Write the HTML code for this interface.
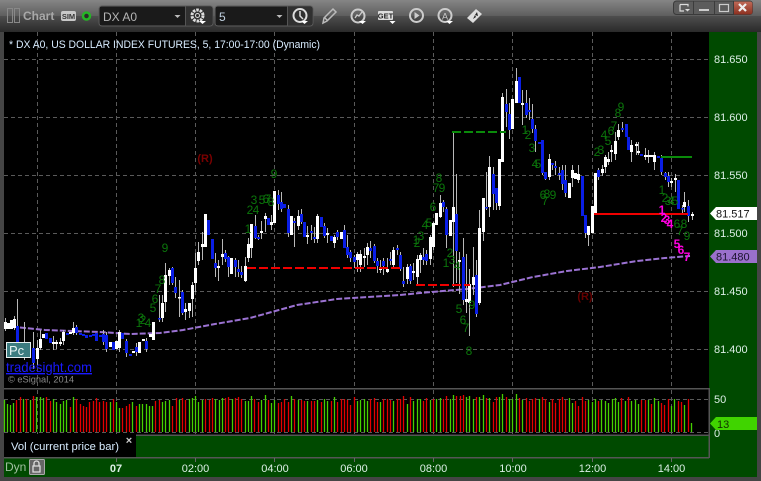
<!DOCTYPE html>
<html><head><meta charset="utf-8"><title>Chart</title>
<style>html,body{margin:0;padding:0;background:#444;width:761px;height:481px;overflow:hidden}svg{display:block}text{font-family:"Liberation Sans",sans-serif}</style></head>
<body>
<svg width="761" height="481" viewBox="0 0 761 481" xmlns="http://www.w3.org/2000/svg">
<defs>
<linearGradient id="t1" x1="0" y1="0" x2="0" y2="1"><stop offset="0" stop-color="#858585"/><stop offset="1" stop-color="#5e5e5e"/></linearGradient>
<linearGradient id="t2" x1="0" y1="0" x2="0" y2="1"><stop offset="0" stop-color="#4e4e4e"/><stop offset="1" stop-color="#2a2a2a"/></linearGradient>
<linearGradient id="cl" x1="0" y1="0" x2="0" y2="1"><stop offset="0" stop-color="#c06a58"/><stop offset="1" stop-color="#8c3020"/></linearGradient>
</defs>
<rect width="761" height="481" fill="#454545"/>
<rect width="761" height="16" fill="url(#t1)"/>
<rect y="16" width="761" height="16" fill="url(#t2)"/>
<rect x="4" y="32" width="705" height="356" fill="#000"/>
<rect x="709" y="32" width="48" height="445" fill="#004a00"/>
<rect x="4" y="388" width="705" height="1.5" fill="#555"/>
<rect x="4" y="389.5" width="705" height="45" fill="#000"/>
<rect x="4" y="434.5" width="705" height="1.5" fill="#555"/>
<rect x="4" y="436" width="705" height="21" fill="#004a00"/>
<rect x="4" y="434" width="132" height="23" fill="#000"/>
<rect x="4" y="457" width="705" height="1.5" fill="#555"/>
<rect x="4" y="458.5" width="753" height="18.5" fill="#004a00"/>
<rect x="708.5" y="388" width="1.5" height="70" fill="#555"/>

<!-- grid -->
<g stroke="#5a5a5a" stroke-width="1" stroke-dasharray="4 3" fill="none">
<path d="M4 59.5H709M4 117.5H709M4 175.5H709M4 233.5H709M4 291.5H709M4 349.5H709"/>
<path d="M37.5 32V388M116.5 32V388M195.5 32V388M274.5 32V388M354.5 32V388M433.5 32V388M512.5 32V388M592.5 32V388M671.5 32V388"/>
<path d="M37.5 390V434M116.5 390V434M195.5 390V434M274.5 390V434M354.5 390V434M433.5 390V434M512.5 390V434M592.5 390V434M671.5 390V434"/>
<path d="M4 399.5H709M4 432.5H709"/>
</g>
<path d="M116.5 458v4M195.5 458v4M274.5 458v4M354.5 458v4M433.5 458v4M512.5 458v4M592.5 458v4M671.5 458v4" stroke="#666" fill="none"/>

<!-- volume -->
<g fill="none" stroke-width="1.3">
<path stroke="#46d000" d="M4.5 432V400M7.5 432V404M10.5 432V405M13.5 432V403M23.5 432V399M30.5 432V400M36.5 432V397M40.5 432V397M43.5 432V398M53.5 432V399M56.5 432V402M60.5 432V404M63.5 432V401M66.5 432V400M73.5 432V397M110.5 432V402M116.5 432V402M119.5 432V408M132.5 432V402M139.5 432V404M142.5 432V404M146.5 432V404M149.5 432V406M152.5 432V406M162.5 432V402M165.5 432V401M169.5 432V400M179.5 432V400M189.5 432V399M192.5 432V398M195.5 432V396M198.5 432V402M202.5 432V400M215.5 432V399M219.5 432V400M222.5 432V398M232.5 432V399M245.5 432V401M248.5 432V401M251.5 432V396M261.5 432V400M265.5 432V395M271.5 432V403M274.5 432V400M291.5 432V396M298.5 432V400M307.5 432V401M317.5 432V400M324.5 432V399M327.5 432V401M334.5 432V397M357.5 432V401M360.5 432V400M364.5 432V399M367.5 432V401M380.5 432V402M393.5 432V401M407.5 432V404M413.5 432V401M417.5 432V399M420.5 432V399M430.5 432V400M436.5 432V399M440.5 432V398M450.5 432V399M453.5 432V395M466.5 432V397M469.5 432V396M473.5 432V399M479.5 432V397M483.5 432V395M489.5 432V398M499.5 432V397M502.5 432V394M509.5 432V399M512.5 432V399M516.5 432V394M522.5 432V400M539.5 432V399M549.5 432V402M569.5 432V398M572.5 432V403M588.5 432V400M592.5 432V402M595.5 432V399M601.5 432V400M605.5 432V401M608.5 432V403M612.5 432V399M615.5 432V398M618.5 432V402M625.5 432V401M631.5 432V401M635.5 432V400M638.5 432V404M648.5 432V400M654.5 432V398M658.5 432V401M671.5 432V406M674.5 432V399M684.5 432V405M691.5 432V423"/>
<path stroke="#e40000" d="M16.5 432V400M20.5 432V397M26.5 432V399M33.5 432V396M46.5 432V397M50.5 432V401M70.5 432V407M76.5 432V399M80.5 432V404M83.5 432V406M86.5 432V407M89.5 432V402M93.5 432V401M96.5 432V398M99.5 432V402M103.5 432V401M106.5 432V402M113.5 432V399M122.5 432V408M126.5 432V406M129.5 432V404M136.5 432V406M155.5 432V401M159.5 432V400M172.5 432V406M176.5 432V398M182.5 432V398M185.5 432V400M205.5 432V399M209.5 432V400M212.5 432V398M225.5 432V398M228.5 432V397M235.5 432V398M238.5 432V397M241.5 432V399M254.5 432V399M258.5 432V402M268.5 432V400M278.5 432V403M281.5 432V402M284.5 432V399M288.5 432V402M294.5 432V399M301.5 432V400M304.5 432V401M311.5 432V401M314.5 432V401M321.5 432V402M331.5 432V401M337.5 432V402M341.5 432V399M344.5 432V399M347.5 432V400M350.5 432V405M354.5 432V397M370.5 432V399M374.5 432V398M377.5 432V402M383.5 432V399M387.5 432V399M390.5 432V400M397.5 432V399M400.5 432V399M403.5 432V396M410.5 432V397M423.5 432V401M426.5 432V398M433.5 432V399M443.5 432V399M446.5 432V396M456.5 432V396M460.5 432V396M463.5 432V395M476.5 432V397M486.5 432V398M493.5 432V402M496.5 432V397M506.5 432V397M519.5 432V398M526.5 432V398M529.5 432V401M532.5 432V399M535.5 432V398M542.5 432V397M545.5 432V399M552.5 432V399M555.5 432V403M559.5 432V399M562.5 432V397M565.5 432V400M575.5 432V401M578.5 432V406M582.5 432V397M585.5 432V401M598.5 432V401M621.5 432V398M628.5 432V397M641.5 432V400M645.5 432V400M651.5 432V404M661.5 432V403M664.5 432V405M668.5 432V399M678.5 432V401M681.5 432V402M688.5 432V399"/>
</g>

<!-- MA -->
<path d="M4 326L25 328L45 330L100 332L130 334L160 333L183 330L215 324L250 318L297 305L337 299L400 295L420 293L467 289L500 285L533 277L567 271L600 267L637 261L665 258L690 256" fill="none" stroke="#9b72d2" stroke-width="2" stroke-dasharray="6 2"/>

<!-- wicks -->
<path fill="none" stroke="#b8b8b8" stroke-width="1" d="M5.5 318V331M14.5 316V330M17.5 299V350M24.5 322V360M33.5 332V369M37.5 340V365M40.5 330V350M53.5 336V350M56.5 340V349M60.5 338V346M63.5 330V345M73.5 322V335M76.5 325V335M103.5 330V345M106.5 332V352M119.5 330V352M126.5 339V357M136.5 343V356M146.5 338V352M159.5 295V322M162.5 295V322M165.5 263V312M169.5 268V285M172.5 267V285M175.5 277V298M179.5 280V317M182.5 290V315M185.5 303V320M189.5 303V318M192.5 282V317M195.5 253V292M198.5 242V265M202.5 232V260M205.5 214V247M215.5 253V277M218.5 260V281M222.5 239V265M225.5 250V262M228.5 256V277M231.5 258V274M235.5 258V277M238.5 260V277M241.5 266V278M245.5 257V282M248.5 238V262M251.5 225V258M255.5 215V239M258.5 235V240M261.5 221V239M265.5 213V232M271.5 215V230M278.5 190V210M281.5 192V212M288.5 205V237M294.5 218V247M298.5 210V230M301.5 209V224M307.5 226V244M311.5 225V240M314.5 227V243M317.5 214V243M324.5 223V238M327.5 228V243M334.5 235V248M337.5 230V240M344.5 225V248M347.5 235V258M350.5 250V262M354.5 255V268M357.5 252V272M360.5 250V272M364.5 248V267M367.5 243V265M370.5 241V258M374.5 244V263M377.5 258V273M380.5 260V273M383.5 258V275M387.5 258V273M390.5 252V265M393.5 247V268M397.5 245V255M400.5 252V271M403.5 267V287M407.5 264V284M410.5 264V284M413.5 263V280M417.5 255V285M420.5 253V273M423.5 248V265M426.5 250V265M430.5 235V265M433.5 222V250M440.5 195V218M443.5 200V212M446.5 207V248M453.5 132V287M456.5 174V283M459.5 252V294M463.5 238V305M466.5 254V313M469.5 269V336M473.5 247V295M476.5 260V317M479.5 210V305M483.5 198V241M486.5 172V210M489.5 156V217M493.5 167V210M496.5 188V210M499.5 159V210M502.5 93V162M506.5 89V127M509.5 103V139M516.5 68V103M522.5 90V125M526.5 90V118M529.5 98V120M532.5 104V133M535.5 125V152M542.5 140V175M545.5 172V180M549.5 154V180M552.5 163V170M555.5 161V175M559.5 167V180M562.5 165V190M565.5 165V197M572.5 165V187M578.5 165V183M585.5 215V238M588.5 226V246M598.5 168V180M602.5 165V176M605.5 155V173M608.5 152V165M611.5 145V162M615.5 132V160M618.5 124V140M622.5 122V132M631.5 140V162M636.5 142V155M638.5 142V155M645.5 148V160M648.5 150V163M654.5 152V170M661.5 155V175M665.5 172V180M668.5 172V187M671.5 178V187M675.5 174V192M682.5 205V214M684.5 192V212M688.5 200V222M692.5 212V220"/>

<!-- white bodies -->
<path fill="none" stroke="#fff" stroke-width="3" d="M5.5 322V329M8.5 323V329M11.5 320V329M14.5 319V328M37.5 348V359M40.5 339V348M43.5 334V338M53.5 342V344M56.5 342V344M60.5 342V344M63.5 332V341M70.5 332V334M73.5 328V333M110.5 342V347M116.5 341V349M119.5 332V348M133.5 351V353M139.5 342V353M143.5 339V341M150.5 334V337M153.5 322V340M162.5 303V318M165.5 275V302M169.5 270V276M179.5 297V298.5M185.5 309V312M189.5 303V311M192.5 285V299M195.5 268V283M198.5 252V261M202.5 244V247M205.5 214V247M218.5 266V268M222.5 254V257M231.5 258V274M245.5 266V281M248.5 244V258M251.5 224V248M261.5 231V233M265.5 216V219M271.5 222V225M274.5 191V223M291.5 216V235M298.5 216V226M307.5 235V237M317.5 216V239M327.5 233V235M334.5 237V243M341.5 232V239M357.5 254V260M360.5 254V265M364.5 256V258M367.5 247V255M380.5 268V270M387.5 269V272M393.5 250V265M407.5 267V279M413.5 271V273M417.5 259V277M420.5 255V260M430.5 237V259M433.5 223V247M436.5 213V225M440.5 203V217M450.5 220V236M453.5 207V222M459.5 260V262M466.5 299V302M469.5 284V303M473.5 277V285M479.5 228V303M483.5 198V232M489.5 167V207M499.5 159V206M502.5 97V162M512.5 99V129M516.5 81V103M522.5 103V105M549.5 159V177M569.5 183V198M572.5 170V178M575.5 173V179M578.5 174V180M588.5 226V235M592.5 206V233M595.5 173V215M602.5 169V173M605.5 157V167M608.5 159V162M611.5 150V152M615.5 141V154M618.5 130V137M631.5 145V152M636.5 144V146M638.5 151V153M645.5 155V157M648.5 155V157M651.5 155V157M654.5 155V162M671.5 181V183M675.5 178V180M684.5 202V207M692.5 214V216"/>
<!-- blue bodies -->
<path fill="none" stroke="#0a1ee6" stroke-width="3" d="M17.5 326V343M20.5 342V347M24.5 346V350M27.5 342V350M33.5 348V363M46.5 333V339M50.5 338V343M67.5 333V335M76.5 327V333M80.5 333V335M83.5 334V336M86.5 335V338M90.5 335V337M93.5 334V336M96.5 333V341M100.5 335V337M103.5 334V342M106.5 335V349M113.5 342V350M122.5 333V339M126.5 341V353M130.5 354V356M136.5 347V352M146.5 341V349M159.5 318V319.5M172.5 268V283M175.5 287V293M182.5 292V313M208.5 220V235M212.5 239V259M215.5 263V268M225.5 253V259M228.5 257V267M235.5 260V267M238.5 269V272M241.5 272V275M255.5 226V238M258.5 237V239M268.5 218V225M278.5 195V204M281.5 202V209M284.5 204V208M288.5 209V233M294.5 221V223M301.5 214V222M304.5 222V237M311.5 231V233M314.5 237V239M321.5 217V227M324.5 226V236M331.5 236V241M337.5 232V237M344.5 230V248M347.5 247V255M350.5 252V258M354.5 257V262M370.5 248V251M374.5 246V261M377.5 261V266M383.5 261V266M390.5 259V261M397.5 248V250M400.5 255V269M403.5 281V284M410.5 266V281M423.5 257V260M426.5 254V261M443.5 202V207M446.5 209V235M456.5 214V251M463.5 257V300M476.5 275V314M486.5 207V208.5M493.5 174V194M496.5 188V203M506.5 104V112M509.5 114V130M519.5 77V103M526.5 103V115M529.5 110V112M532.5 119V129M535.5 129V141M539.5 142V144M542.5 140V173M545.5 172V179M552.5 163V165M555.5 166V168M559.5 173V175M562.5 170V184M565.5 180V193M582.5 176V216M585.5 215V233M598.5 170V177M622.5 128V130M626.5 124V137M628.5 137V150M641.5 154V156M658.5 156V158M661.5 158V172M665.5 173V177M668.5 176V182M678.5 180V209M682.5 208V209.5M688.5 206V216"/>

<!-- levels -->
<path d="M247 268H400" fill="none" stroke="#f00000" stroke-width="2" stroke-dasharray="9 3"/>
<path d="M416 285H470" fill="none" stroke="#f00000" stroke-width="2" stroke-dasharray="9 3"/>
<path d="M452 132H506" fill="none" stroke="#0a8a0a" stroke-width="2" stroke-dasharray="9 3"/>
<path d="M594 214H688" fill="none" stroke="#f00000" stroke-width="2"/>
<path d="M661 157H692" fill="none" stroke="#0a8a0a" stroke-width="2"/>

<!-- setup numbers -->
<g fill="#0b750b" font-size="12" text-anchor="middle">
<text x="165" y="252">9</text><text x="162" y="284">8</text><text x="158" y="293">7</text><text x="155" y="303">6</text><text x="153" y="312">5</text><text x="148" y="327">4</text><text x="143" y="324">2</text><text x="139" y="327">1</text><text x="141" y="322">3</text>
<text x="248" y="233">1</text><text x="250" y="214">2</text><text x="256" y="214">4</text><text x="254" y="204">3</text><text x="262" y="204">5</text><text x="266" y="203">6</text><text x="268" y="203">7</text><text x="271" y="206">8</text><text x="274" y="178">9</text>
<text x="439" y="182">8</text><text x="436" y="192">7</text><text x="442" y="192">9</text><text x="433" y="211">6</text><text x="429" y="227">5</text><text x="425" y="229">4</text><text x="421" y="240">3</text><text x="417" y="247">2</text><text x="416" y="244">1</text>
<text x="450" y="257">2</text><text x="446" y="267">1</text><text x="452" y="264">3</text><text x="457" y="270">4</text><text x="459" y="313">5</text><text x="463" y="324">6</text><text x="466" y="332">7</text><text x="469" y="355">8</text><text x="472" y="309">9</text>
<text x="525" y="134">1</text><text x="528" y="139">2</text><text x="532" y="152">3</text><text x="535" y="168">4</text><text x="538" y="168">5</text><text x="543" y="199">6</text><text x="545" y="205">7</text><text x="547" y="198">8</text><text x="553" y="199">9</text>
<text x="621" y="111">9</text><text x="618" y="117">8</text><text x="614" y="130">7</text><text x="611" y="135">6</text><text x="608" y="145">5</text><text x="604" y="139">4</text><text x="601" y="154">3</text><text x="597" y="156">2</text>
<text x="662" y="194">1</text><text x="665" y="202">2</text><text x="668" y="205">3</text><text x="671" y="205">4</text><text x="675" y="205">5</text><text x="677" y="228">6</text><text x="680" y="235">7</text><text x="684" y="228">8</text><text x="687" y="240">9</text>
</g>
<g fill="#ff00e0" font-size="12" text-anchor="middle" font-weight="bold">
<text x="662" y="214">1</text><text x="664" y="222">2</text><text x="667" y="224">3</text><text x="670" y="228">4</text><text x="677" y="248">5</text><text x="681" y="254">6</text><text x="687" y="261">7</text>
</g>
<g fill="#7a0000" font-size="11" text-anchor="middle" font-weight="bold"><text x="205" y="162">(R)</text></g>
<g fill="#660000" font-size="11" text-anchor="middle" font-weight="bold"><text x="585" y="300">(R)</text></g>

<!-- watermark items -->
<rect x="6.5" y="342.5" width="24" height="15" fill="#3c7c80" stroke="#e8f0f0"/>
<text x="9" y="355" fill="#e8f4f4" font-size="13">Pc</text>
<text x="6" y="372" fill="#1a1aff" font-size="14" text-decoration="underline" textLength="86" lengthAdjust="spacingAndGlyphs">tradesight.com</text>
<text x="8" y="382.5" fill="#8a8a8a" font-size="9.5" textLength="66" lengthAdjust="spacingAndGlyphs">© eSignal, 2014</text>

<!-- title -->
<text x="9" y="48" fill="#d8ecff" font-size="11" textLength="311" lengthAdjust="spacingAndGlyphs">* DX A0, US DOLLAR INDEX FUTURES, 5, 17:00-17:00 (Dynamic)</text>

<!-- axis -->
<g fill="#dcefe6" font-size="11">
<text x="714" y="63">81.650</text><text x="714" y="121">81.600</text><text x="714" y="179">81.550</text><text x="714" y="237">81.500</text><text x="714" y="295">81.450</text><text x="714" y="353">81.400</text>
<text x="714" y="403">50</text><text x="714" y="437">0</text>
</g>
<path d="M710 213.5L716 207H757V220H716Z" fill="#fff"/>
<text x="716" y="217.5" fill="#111" font-size="11">81.517</text>
<path d="M710 256.5L716 250H757V263H716Z" fill="#9a70cc"/>
<text x="716" y="260.5" fill="#1c1430" font-size="11">81.480</text>
<path d="M710 423.5L716 417H757V430H716Z" fill="#40d400"/>
<text x="717" y="428" fill="#103000" font-size="11">13</text>

<!-- Vol tab -->
<text x="11" y="450" fill="#d8ecff" font-size="11" textLength="108" lengthAdjust="spacingAndGlyphs">Vol (current price bar)</text>
<text x="129" y="444" fill="#cccccc" font-size="11" font-weight="bold" text-anchor="middle">×</text>

<!-- time axis -->
<text x="5" y="471" fill="#a0c0a0" font-size="12">Dyn</text>
<rect x="29.5" y="459.5" width="15" height="15" rx="1" fill="#666" stroke="#aaa"/>
<path d="M34 466v-2.5a2.5 2.5 0 0 1 5 0v2.5M33 466h7v6h-7z" fill="none" stroke="#ddd" stroke-width="1.3"/>
<g fill="#dcefe6" font-size="11" text-anchor="middle">
<text x="116" y="472" font-weight="bold">07</text><text x="195.5" y="472">02:00</text><text x="275" y="472">04:00</text><text x="354" y="472">06:00</text><text x="433.5" y="472">08:00</text><text x="513" y="472">10:00</text><text x="592.5" y="472">12:00</text><text x="671.5" y="472">14:00</text>
</g>

<!-- toolbar -->
<rect x="7.5" y="8.5" width="5" height="14" fill="none" stroke="#888"/>
<rect x="14.5" y="8.5" width="5" height="14" fill="none" stroke="#888"/>
<text x="23" y="20" fill="#a8a8a8" font-size="12" font-weight="bold">Chart</text>
<rect x="61" y="11" width="15" height="10" rx="2" fill="#c8c8c8"/>
<text x="68.5" y="19" fill="#333" font-size="7.5" font-weight="bold" text-anchor="middle">SIM</text>
<circle cx="86.5" cy="16" r="3.5" fill="#2a2a2a" stroke="#25b525" stroke-width="2.5"/>

<rect x="99" y="6" width="114" height="20" rx="3" fill="#222" stroke="#5a5a5a"/>
<rect x="100" y="7" width="85" height="18" fill="#1a1a1a"/>
<rect x="186" y="7" width="26" height="18" fill="#303030"/>
<path d="M185.5 6v20" stroke="#555"/>
<text x="103" y="21" fill="#b4b4b4" font-size="12">DX A0</text>
<path d="M174.5 15h6l-3 3z" fill="#bbb"/>
<circle cx="197.5" cy="15.5" r="5.5" fill="none" stroke="#ddd" stroke-width="3" stroke-dasharray="2.5 1"/>
<circle cx="197.5" cy="15.5" r="2" fill="none" stroke="#ddd"/>
<path d="M199 21h7l-3.5 3z" fill="#fff"/>

<rect x="215" y="6" width="98" height="20" rx="3" fill="#222" stroke="#5a5a5a"/>
<rect x="216" y="7" width="71" height="18" fill="#1a1a1a"/>
<rect x="288" y="7" width="24" height="18" fill="#303030"/>
<path d="M287.5 6v20" stroke="#555"/>
<text x="219" y="21" fill="#c0d0e0" font-size="12">5</text>
<path d="M276.5 15h6l-3 3z" fill="#bbb"/>
<circle cx="300" cy="15.5" r="6.5" fill="none" stroke="#ddd" stroke-width="2"/>
<path d="M300 11v5l3 3" fill="none" stroke="#ddd" stroke-width="1.5"/>
<path d="M301 21h7l-3.5 3z" fill="#fff"/>

<path d="M323 23l1-5 9-9 3 3-9 9zM325 18l3 3" fill="none" stroke="#bbb" stroke-width="1.5"/>
<circle cx="358" cy="16" r="6.5" fill="none" stroke="#ccc" stroke-width="2"/>
<path d="M355 18l2-3 2 1 3-4" fill="none" stroke="#ccc" stroke-width="1.3"/>
<path d="M359 21h7l-3.5 3z" fill="#fff"/>
<rect x="378" y="11" width="15" height="9" rx="1" fill="#ddd"/>
<text x="385.5" y="18.5" fill="#222" font-size="7.5" font-weight="bold" text-anchor="middle">GET</text>
<path d="M389.5 21h6l-3 3z" fill="#fff"/>
<circle cx="416.5" cy="15.5" r="6.5" fill="none" stroke="#ccc" stroke-width="2"/>
<path d="M414.5 12v7l5-3.5z" fill="#ccc"/>
<circle cx="445" cy="15.5" r="6.5" fill="none" stroke="#ccc" stroke-width="2"/>
<text x="445" y="19.5" fill="#ccc" font-size="9" text-anchor="middle">A</text>
<path d="M446 21h7l-3.5 3z" fill="#fff"/>
<path d="M467 18l9-9 6 5-9 9z" fill="#ddd"/>
<path d="M473 19l2-4 1 2zM477 12l1 4-3-1z" fill="#222"/>

<!-- window buttons -->
<rect x="673.5" y="1" width="79" height="13.5" rx="3" fill="#5c5c5c" stroke="#3a3a3a"/>
<path d="M693.5 1v13.5M714.5 1v13.5M733.5 1v13.5" stroke="#3c3c3c"/>
<path d="M734 1.5h16a2.5 2.5 0 0 1 2.5 2.5v8a2.5 2.5 0 0 1-2.5 2.5h-16z" fill="url(#cl)"/>
<path d="M680 4.5h8v2M680 4.5v6.5h4" fill="none" stroke="#ddd" stroke-width="1.2"/>
<path d="M685 9h5l-2.5 2.5z" fill="#ddd"/>
<rect x="699" y="9" width="10" height="2" fill="#ccc"/>
<rect x="719.5" y="4.5" width="9" height="7" fill="none" stroke="#ccc" stroke-width="1.2"/>
<path d="M739 4l7 7M746 4l-7 7" stroke="#eee" stroke-width="2.2"/>
</svg>
</body></html>
